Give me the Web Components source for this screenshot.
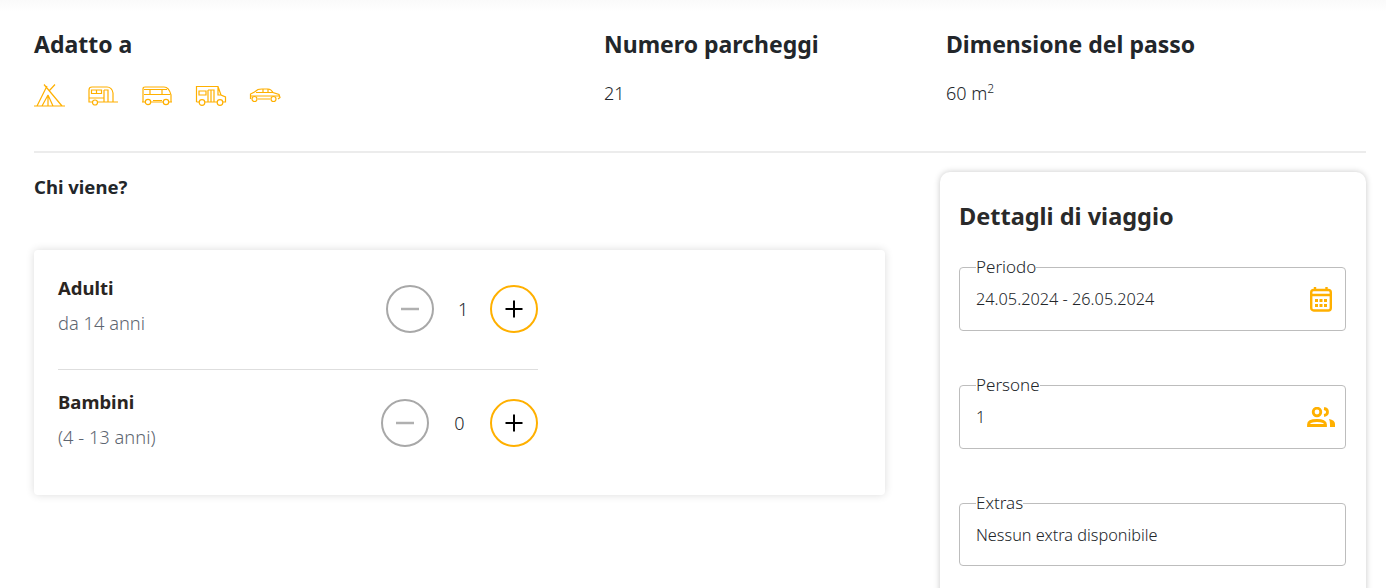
<!DOCTYPE html>
<html lang="it">
<head>
<meta charset="utf-8">
<title>Dettagli</title>
<style>
    html, body { margin: 0; height: 588px; overflow: hidden; background: #fff; }
    body { font-family: "Noto Sans", sans-serif; color: #22262a; }
</style>
</head>
<body>
<camp-page></camp-page>
<script>
"use strict";
const icons = {
    tent: `<svg width="32" height="24" viewBox="0 0 32 24"><path d="M0 25h31M3 25L13 5M10 3.500L28 25M21 3.500L15 10M8 25l6-11v11M14 14l5 11"/></svg>`,
    caravan: `<svg width="32" height="24" viewBox="0 0 32 24"><path d="M1 21V9q0-3 3-3h15q5 0 6 6v9zM25 21h5M3.500 9h10v3.500h-10zM8.500 9v3.500M16 9h4v12M16 9v12M1 17h15"/><circle cx="7" cy="21.500" r="2.500" fill="#fff"/></svg>`,
    van: `<svg width="32" height="24" viewBox="0 0 32 24"><path d="M1 21V8q0-2 2-2h19q5 0 7 8v7M2 13.500h26M2 8.500h23M8 8.500v5M20 8.500v5M11 19.500h9M0 21h3M9 21h12M27 21h3"/><circle cx="6" cy="21" r="2.700" fill="#fff"/><circle cx="24" cy="21" r="2.700" fill="#fff"/></svg>`,
    camper: `<svg width="32" height="24" viewBox="0 0 32 24"><path d="M.500 21V5.500h21.500l3 8.500 4.500 2v5h-3M9 21h13M3 21H.500M3 10h7v4H3zM12 9h6v12M12 9v12M15 9v12M22 5.500V14h3"/><circle cx="6" cy="21.500" r="2.800" fill="#fff"/><circle cx="24" cy="21.500" r="2.800" fill="#fff"/></svg>`,
    car: `<svg width="32" height="24" viewBox="0 0 32 24"><path d="M.500 18v-5l4-2 3.500-2.500Q9 8 12 8h6q3 0 5 3.500l6 2 1 3-2 1.500M8 18h12M6 11.500h17M13 8.500v3M18 8.500v3M1 15h29"/><circle cx="4.500" cy="18" r="2.500" fill="#fff"/><circle cx="23.500" cy="18" r="2.500" fill="#fff"/></svg>`,
    calendar: `<svg width="24" height="26" viewBox="0 0 24 26" fill="none" stroke="#ffb000" stroke-width="2.400"><rect x="2.200" y="4" width="19.600" height="20.500" rx="2.500"/><path d="M6 1v3M17.500 1v3M2 9h20"/><path fill="#ffb000" stroke="none" d="M6 13h3v3H6zM10.500 13h3v3h-3zM15 13h3v3h-3zM6 18h3v3H6zM10.500 18h3v3h-3zM15 18h3v3h-3z"/></svg>`,
    people: `<svg width="28" height="20" viewBox="0 0 28 20" fill="none" stroke="#ffb000" stroke-width="2.800"><circle cx="10" cy="5" r="3.800"/><path d="M1.500 18.500v-1q0-4 8.500-4t8.500 4v1z"/><path d="M17 1.500q3.500.5 3.500 3.500t-3.500 3.500"/><path fill="#ffb000" stroke="none" d="M22 12q6 1 6 5v3h-5v-3q0-3-1-5z"/></svg>`
};

class CampHeading extends HTMLElement {
    connectedCallback() {
        this.attachShadow({ mode: 'open' }).innerHTML = `
            <style>
                :host { display: block; }
                h2 { margin: 0; font-size: 23px; line-height: 30px; font-weight: 700; color: #22262a; }
                div { margin-top: 19px; font-size: 18px; line-height: 30px; font-weight: 300; color: #22262a; }
                ::slotted(sup) { font-size: 12px; line-height: 0; }
            </style>
            <h2>${this.getAttribute('title')}</h2>
            <div><slot></slot></div>
        `;
    }
}
customElements.define("camp-heading", CampHeading);

class VehicleIcons extends HTMLElement {
    connectedCallback() {
        this.attachShadow({ mode: 'open' }).innerHTML = `
            <style>
                :host { display: flex; gap: 22px; height: 30px; align-items: center; }
                svg { display: block; overflow: visible; fill: none; stroke: #ffb000; stroke-width: 1.200; }
            </style>
            ${icons.tent}${icons.caravan}${icons.van}${icons.camper}${icons.car}
        `;
    }
}
customElements.define("vehicle-icons", VehicleIcons);

class GuestRow extends HTMLElement {
    connectedCallback() {
        const w = this.getAttribute('count-width') || '10';
        this.attachShadow({ mode: 'open' }).innerHTML = `
            <style>
                :host { display: flex; justify-content: space-between; align-items: center; height: 108px; box-sizing: border-box; }
                .text { margin-bottom: 7px; }
                .name { font-size: 18.500px; font-weight: 700; line-height: 26px; color: #2a2522; }
                .age { margin-top: 9px; font-size: 18.300px; font-weight: 300; line-height: 26px; color: #5d6570; }
                .stepper { display: flex; align-items: center; }
                .count { width: ${w}px; margin: 0 24px; text-align: center; font-size: 18px; font-weight: 300; color: #22262a; }
                button { width: 48px; height: 48px; padding: 0; border-radius: 50%; background: #fff; display: grid; place-items: center; box-sizing: border-box; }
                .minus { border: 2px solid #a8a8a8; }
                .plus { border: 2px solid #ffb000; }
                button svg { display: block; }
            </style>
            <div class="text">
                <div class="name">${this.getAttribute('name')}</div>
                <div class="age">${this.getAttribute('age')}</div>
            </div>
            <div class="stepper">
                <button class="minus"><svg width="18" height="18" viewBox="0 0 18 18"><path d="M0 9h18" stroke="#b0b0b0" stroke-width="2.500"/></svg></button>
                <span class="count">${this.getAttribute('count')}</span>
                <button class="plus"><svg width="18" height="18" viewBox="0 0 18 18"><path d="M.500 9h17M9 .500v17" stroke="#000" stroke-width="2"/></svg></button>
            </div>
        `;
    }
}
customElements.define("guest-row", GuestRow);

class GuestCard extends HTMLElement {
    connectedCallback() {
        this.attachShadow({ mode: 'open' }).innerHTML = `
            <style>
                :host { display: block; height: 245px; box-sizing: border-box; padding: 5px 24px 0; background: #fff; border-radius: 4px; box-shadow: 0 0 8px rgba(0,0,0,.14); }
                .rows { width: 480px; display: flex; flex-direction: column; }
                hr { width: 100%; margin: 6px 0 -1px; border: 0; border-top: 1px solid #dedede; }
            </style>
            <div class="rows">
                <guest-row name="Adulti" age="da 14 anni" count="1" count-width="8"></guest-row>
                <hr>
                <guest-row name="Bambini" age="(4 - 13 anni)" count="0" count-width="13"></guest-row>
            </div>
        `;
    }
}
customElements.define("guest-card", GuestCard);

class TripField extends HTMLElement {
    connectedCallback() {
        const name = this.getAttribute('icon');
        const icon = icons[name] || '';
        this.attachShadow({ mode: 'open' }).innerHTML = `
            <style>
                :host { display: block; }
                :host([icon="people"]) svg { margin-right: -2px; }
                :host(:not([icon])) fieldset { height: 71px; }
                fieldset { margin: 0; padding: 0 12px 0 16px; height: 72px; box-sizing: border-box; border: 1px solid #bdbdbd; border-radius: 4px; }
                legend { padding: 0; font-size: 17px; line-height: 16px; font-weight: 300; color: #22262a; }
                .row { display: flex; align-items: center; justify-content: space-between; height: 48px; font-size: 16.300px; font-weight: 300; color: #22262a; }
                svg { display: block; }
            </style>
            <fieldset>
                <legend>${this.getAttribute('label')}</legend>
                <div class="row"><span><slot></slot></span>${icon}</div>
            </fieldset>
        `;
    }
}
customElements.define("trip-field", TripField);

class TripCard extends HTMLElement {
    connectedCallback() {
        this.attachShadow({ mode: 'open' }).innerHTML = `
            <style>
                :host { display: block; height: 440px; box-sizing: border-box; padding: 28px 20px 0 19px; background: #fff; border-radius: 10px; box-shadow: 0 0 6px rgba(0,0,0,.22); }
                h3 { margin: 0 0 27px; font-size: 23.500px; line-height: 32px; font-weight: 700; color: #2a2a2a; }
                .fields { display: flex; flex-direction: column; gap: 46px; }
            </style>
            <h3>Dettagli di viaggio</h3>
            <div class="fields"><slot></slot></div>
        `;
    }
}
customElements.define("trip-card", TripCard);

class CampPage extends HTMLElement {
    connectedCallback() {
        this.attachShadow({ mode: 'open' }).innerHTML = `
            <style>
                :host { display: block; height: 588px; box-sizing: border-box; padding: 0 20px 0 34px; overflow: hidden; background: linear-gradient(#fafafa, #fff 12px); }
                .facts { display: grid; grid-template-columns: 570px 342px 1fr; padding-top: 29px; height: 153px; box-sizing: border-box; border-bottom: 2px solid #ececec; }
                .main { display: grid; grid-template-columns: 851px 426px; gap: 55px; padding-top: 19px; }
                .who { margin: 2px 0 50px; font-size: 18.500px; line-height: 26px; font-weight: 700; color: #22262a; }
            </style>
            <div class="facts">
                <camp-heading title="Adatto a"><vehicle-icons></vehicle-icons></camp-heading>
                <camp-heading title="Numero parcheggi">21</camp-heading>
                <camp-heading title="Dimensione del passo">60 m<sup>2</sup></camp-heading>
            </div>
            <div class="main">
                <section>
                    <div class="who">Chi viene?</div>
                    <guest-card></guest-card>
                </section>
                <trip-card>
                    <trip-field label="Periodo" icon="calendar">24.05.2024 - 26.05.2024</trip-field>
                    <trip-field label="Persone" icon="people">1</trip-field>
                    <trip-field label="Extras">Nessun extra disponibile</trip-field>
                </trip-card>
            </div>
        `;
    }
}
customElements.define("camp-page", CampPage);
</script>
</body>
</html>
